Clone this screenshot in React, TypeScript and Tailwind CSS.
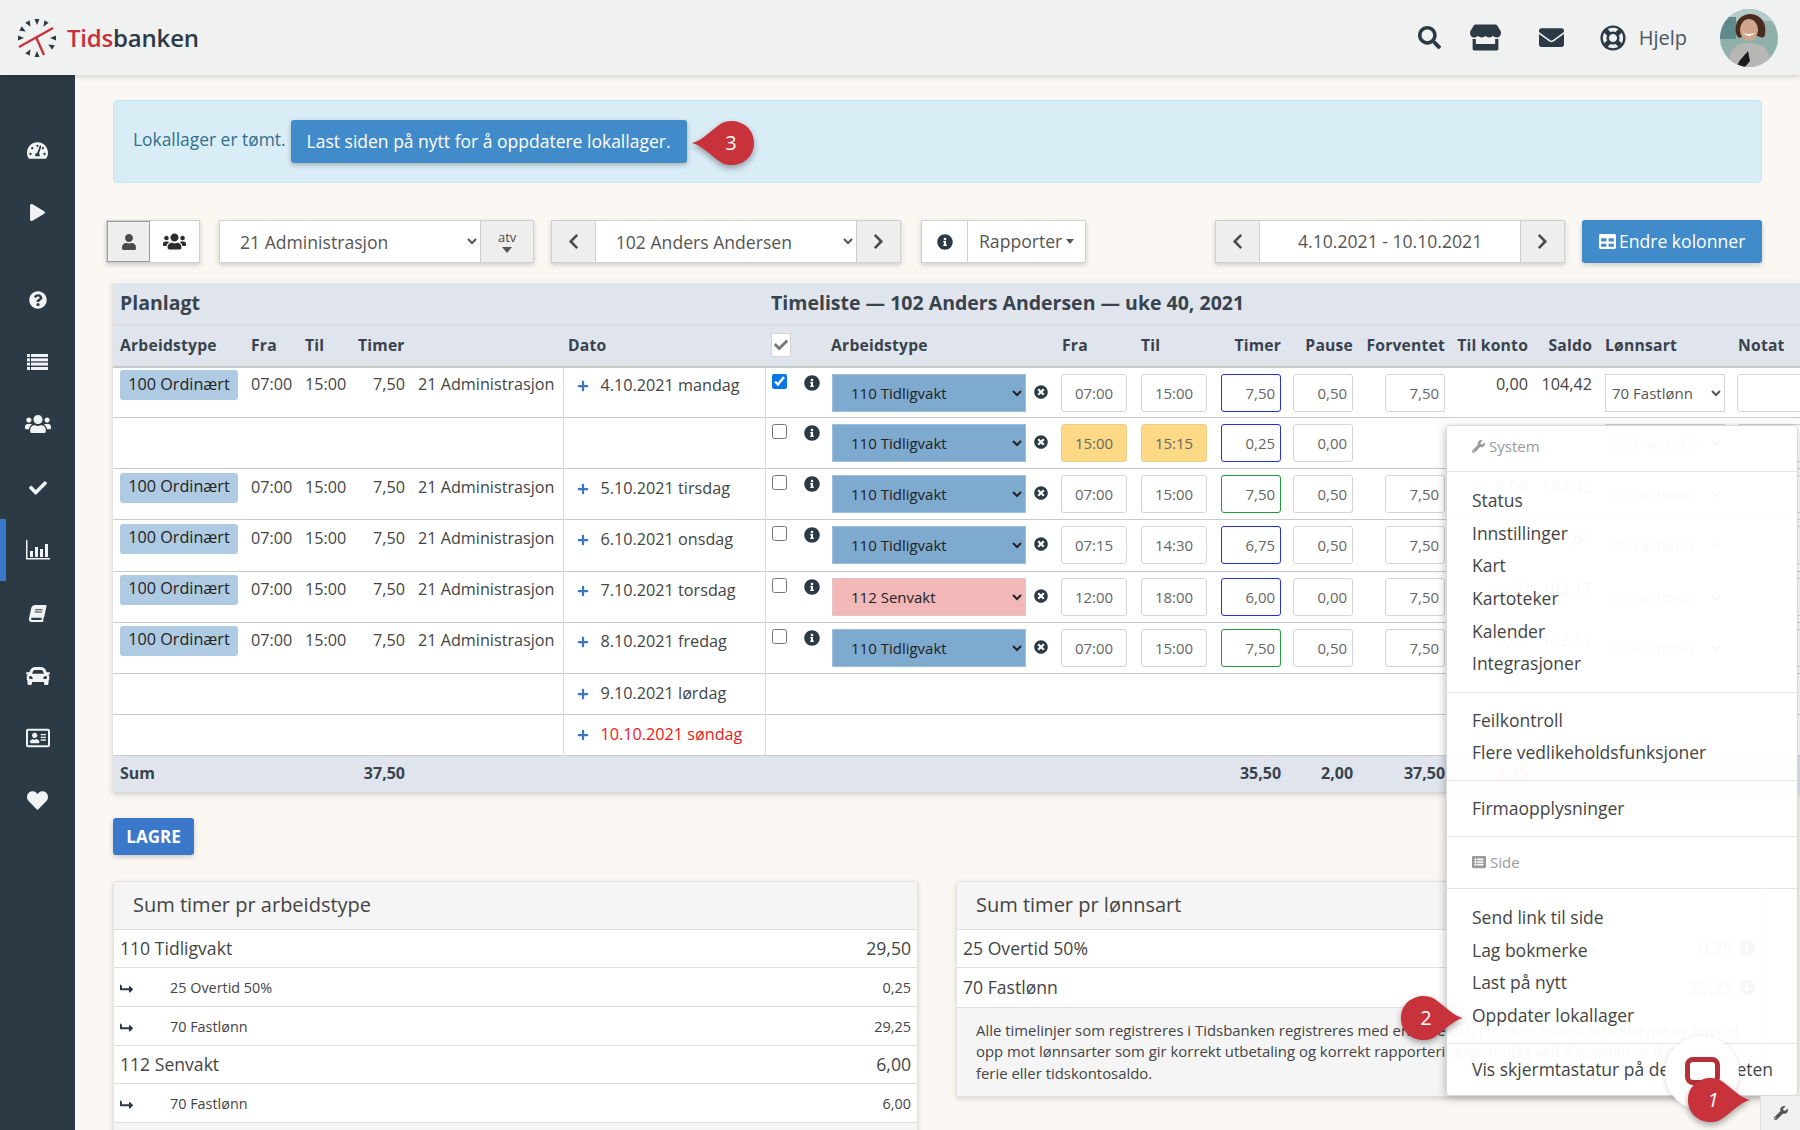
import {
  FaBook, FaCar, FaCheck, FaChevronLeft, FaChevronRight, FaEnvelope, FaHeart, FaInfoCircle, FaLevelUpAlt,
  FaListAlt, FaPlay, FaPlus, FaQuestionCircle, FaRegAddressCard, FaRegLifeRing, FaSearch, FaStore, FaTable,
  FaTachometerAlt, FaTimesCircle, FaUser, FaUsers, FaWrench,
} from "react-icons/fa";

interface Row {
  plan: boolean;
  date?: string;
  type: string;
  fra: string;
  til: string;
  timer: string;
  pause: string;
  forv?: string;
  konto?: string;
  saldo?: string;
  lonn: string;
  warn?: boolean;
  green?: boolean;
  checked?: boolean;
  // the rows in the picture are not all the same height, and their text sits a little differently
  h: string;
  tp: string;
  dp: string;
  bp: string;
}

const ROWS: Row[] = [
  { h: "h-[50px]", tp: "pt-[4px]", dp: "pt-[5px]", bp: "pt-[2px]", plan: true, date: "4.10.2021 mandag", type: "110 Tidligvakt", fra: "07:00", til: "15:00", timer: "7,50", pause: "0,50", forv: "7,50", konto: "0,00", saldo: "104,42", lonn: "70 Fastlønn", checked: true },
  { h: "h-[51px]", tp: "pt-[6px]", dp: "pt-[7px]", bp: "pt-[4px]", plan: false, type: "110 Tidligvakt", fra: "15:00", til: "15:15", timer: "0,25", pause: "0,00", lonn: "25 Overtid 50%", warn: true },
  { h: "h-[51px]", tp: "pt-[6px]", dp: "pt-[7px]", bp: "pt-[4px]", plan: true, date: "5.10.2021 tirsdag", type: "110 Tidligvakt", fra: "07:00", til: "15:00", timer: "7,50", pause: "0,50", forv: "7,50", konto: "0,00", saldo: "104,42", lonn: "70 Fastlønn", green: true },
  { h: "h-[52px]", tp: "pt-[6px]", dp: "pt-[7px]", bp: "pt-[4px]", plan: true, date: "6.10.2021 onsdag", type: "110 Tidligvakt", fra: "07:15", til: "14:30", timer: "6,75", pause: "0,50", forv: "7,50", konto: "-0,75", saldo: "103,67", lonn: "70 Fastlønn" },
  { h: "h-[51px]", tp: "pt-[5px]", dp: "pt-[6px]", bp: "pt-[3px]", plan: true, date: "7.10.2021 torsdag", type: "112 Senvakt", fra: "12:00", til: "18:00", timer: "6,00", pause: "0,00", forv: "7,50", konto: "-1,50", saldo: "102,17", lonn: "70 Fastlønn" },
  { h: "h-[51px]", tp: "pt-[5px]", dp: "pt-[6px]", bp: "pt-[3px]", plan: true, date: "8.10.2021 fredag", type: "110 Tidligvakt", fra: "07:00", til: "15:00", timer: "7,50", pause: "0,50", forv: "7,50", konto: "0,00", saldo: "102,17", lonn: "70 Fastlønn", green: true },
];

function Logo() {
  const ticks = [0, 30, 90, 120, 180, 210, 270, 300, 330];
  return (
    <svg width="42" height="42" viewBox="0 0 42 42" className="shrink-0">
      {ticks.map((a) => (
        <polygon key={a} points="21,8 18.5,2 23.5,2" fill="#2c3a46" transform={`rotate(${a} 21 21)`} />
      ))}
      <path d="M3 30 L37 11" stroke="#c8323b" strokeWidth="2.4" />
      <path d="M20 20 L28 38" stroke="#c8323b" strokeWidth="2.4" />
    </svg>
  );
}

function Avatar() {
  return (
    <svg width="58" height="58" viewBox="0 0 58 58" className="shrink-0 rounded-full">
      <rect width="58" height="58" fill="#8fb0ab" />
      <rect x="0" y="0" width="58" height="12" fill="#b4cbc9" />
      <rect x="0" y="8" width="16" height="22" fill="#5f8a8c" />
      <path d="M16 24 C14 9 24 5 31 5 C42 6 47 15 45 26 C44 30 40 28 38 27 L22 28 C19 30 17 28 16 24 Z" fill="#4a2c1e" />
      <ellipse cx="29" cy="21" rx="9" ry="11" fill="#d0a68c" />
      <path d="M23 24 Q29 30 35 24 Q29 26 23 24 Z" fill="#fff" />
      <path d="M8 58 C8 46 12 38 20 35 L26 34 L32 34 L42 37 C48 40 51 50 51 58 Z" fill="#b7b7b5" />
      <path d="M17 58 C18 52 24 47 28 42 L30 52 L25 58 Z" fill="#1c1c1e" />
    </svg>
  );
}

function Callout({ n, className, dir }: { n: string; className: string; dir: "left" | "right" }) {
  return (
    <div className={`absolute flex items-center justify-center ${className}`}>
      <svg width="66" height="50" viewBox="0 0 66 50" className="absolute left-0 top-0 drop-shadow-[0_3px_3px_rgba(0,0,0,0.35)]">
        {dir === "left" ? (
          <path d="M2 25 C12 23 22 11 32 5 C44 -1 64 6 64 25 C64 44 44 51 32 45 C22 39 12 27 2 25 Z" fill="#c8323b" />
        ) : (
          <path d="M64 25 C54 23 44 11 34 5 C22 -1 2 6 2 25 C2 44 22 51 34 45 C44 39 54 27 64 25 Z" fill="#c8323b" />
        )}
      </svg>
      <span className={`relative text-[20px] text-white ${dir === "left" ? "ml-[16px]" : "mr-[12px]"} ${n === "1" ? "italic" : ""}`}>{n}</span>
    </div>
  );
}

function NavIcon({ children, active, mt }: { children: React.ReactNode; active?: boolean; mt: string }) {
  return (
    <div className={`relative flex h-[22px] items-center justify-center text-[#f2f3f4] ${mt}`}>
      {active && <div className="absolute left-0 top-[-20px] h-[62px] w-[6px] bg-[#3b78c9]" />}
      {children}
    </div>
  );
}

function Sidebar() {
  return (
    <aside className="w-[75px] shrink-0 bg-[#2c3a46] pt-[64px]">
      <NavIcon mt="mt-0"><FaTachometerAlt size={21} /></NavIcon>
      <NavIcon mt="mt-[40px]"><FaPlay size={17} /></NavIcon>
      <NavIcon mt="mt-[66px]"><FaQuestionCircle size={18} /></NavIcon>
      <NavIcon mt="mt-[40px]">
        <svg width="21" height="16" viewBox="0 0 21 16" fill="currentColor">
          <rect x="0" y="0" width="3" height="3" /><rect x="4" y="0" width="17" height="3" />
          <rect x="0" y="4.3" width="3" height="3" /><rect x="4" y="4.3" width="17" height="3" />
          <rect x="0" y="8.6" width="3" height="3" /><rect x="4" y="8.6" width="17" height="3" />
          <rect x="0" y="13" width="3" height="3" /><rect x="4" y="13" width="17" height="3" />
        </svg>
      </NavIcon>
      <NavIcon mt="mt-[40px]"><FaUsers size={26} /></NavIcon>
      <NavIcon mt="mt-[42px]"><FaCheck size={18} /></NavIcon>
      <NavIcon mt="mt-[40px]" active>
        <svg width="24" height="20" viewBox="0 0 24 20" fill="currentColor">
          <path d="M0 0h1.5v18H24v1.5H0z" />
          <rect x="4" y="11" width="3" height="6" />
          <rect x="9" y="7" width="3" height="10" />
          <rect x="14" y="9" width="3" height="8" />
          <rect x="19" y="4" width="3" height="13" />
        </svg>
      </NavIcon>
      <NavIcon mt="mt-[41px]"><FaBook size={17} className="-skew-x-12" /></NavIcon>
      <NavIcon mt="mt-[41px]"><FaCar size={24} /></NavIcon>
      <NavIcon mt="mt-[40px]"><FaRegAddressCard size={24} /></NavIcon>
      <NavIcon mt="mt-[40px]"><FaHeart size={21} /></NavIcon>
    </aside>
  );
}

function Header() {
  return (
    <header className="relative z-10 flex h-[75px] items-center bg-[#f0f1f1] pl-[16px] pr-[22px] shadow-[0_2px_5px_rgba(0,0,0,0.15)]">
      <Logo />
      <div className="ml-[9px] text-[24px] font-semibold tracking-[-0.2px] text-[#2c3a46]">
        <span className="text-[#c8323b]">Tids</span>banken
      </div>
      <div className="ml-auto flex items-center text-[#2c3a46]">
        <FaSearch size={23} />
        <FaStore size={31} className="ml-[29px]" />
        <FaEnvelope size={25} className="ml-[38px]" />
        <FaRegLifeRing size={26} className="ml-[36px]" />
        <span className="ml-[13px] text-[20px] text-[#4b5763]">Hjelp</span>
        <div className="ml-[33px]"><Avatar /></div>
      </div>
    </header>
  );
}

function Toolbar() {
  const box = "flex h-[43px] items-center border border-[#cfcfcf] bg-white shadow-[0_2px_5px_rgba(0,0,0,0.18)]";
  const grey = "flex h-full items-center justify-center bg-[#eeeeee] text-[#4b4b4b]";
  return (
    <div className="-ml-[7px] mt-[37px] flex items-center text-[17.6px] text-[#555555]">
      <div className={`${box} w-[94px]`}>
        <div className={`${grey} w-[44px] border border-[#9c9c9c] text-[#2c2c2c]`}><FaUser size={16} /></div>
        <div className="flex w-[50px] justify-center text-[#2c2c2c]"><FaUsers size={23} /></div>
      </div>
      <div className={`${box} ml-[19px] w-[315px]`}>
        <select defaultValue="a" className="h-full w-[262px] bg-white pl-[16px] pr-[4px] text-[17.6px] text-[#555555] outline-none">
          <option value="a">21 Administrasjon</option>
        </select>
        <div className={`${grey} w-[53px] flex-col border-l border-[#cfcfcf] text-[13px] leading-[14px]`}>
          atv
          <span className="mt-[3px] h-0 w-0 border-x-[5px] border-t-[6px] border-x-transparent border-t-[#555555]" />
        </div>
      </div>
      <div className={`${box} ml-[17px] w-[350px]`}>
        <div className={`${grey} w-[44px] border-r border-[#cfcfcf]`}><FaChevronLeft size={17} /></div>
        <select defaultValue="a" className="h-full w-[262px] bg-white pl-[16px] pr-[4px] text-[17.6px] text-[#555555] outline-none">
          <option value="a">102 Anders Andersen</option>
        </select>
        <div className={`${grey} w-[44px] border-l border-[#cfcfcf]`}><FaChevronRight size={17} /></div>
      </div>
      <div className={`${box} ml-[20px] w-[165px]`}>
        <div className="flex h-full w-[46px] items-center justify-center border-r border-[#cfcfcf] text-[#2c3a46]"><FaInfoCircle size={16} /></div>
        <div className="flex items-center pl-[11px]">
          Rapporter
          <span className="ml-[4px] h-0 w-0 border-x-[4px] border-t-[5px] border-x-transparent border-t-[#555555]" />
        </div>
      </div>
      <div className={`${box} ml-auto w-[350px]`}>
        <div className={`${grey} w-[44px] border-r border-[#cfcfcf]`}><FaChevronLeft size={17} /></div>
        <div className="flex-1 text-center">4.10.2021 - 10.10.2021</div>
        <div className={`${grey} w-[44px] border-l border-[#cfcfcf]`}><FaChevronRight size={17} /></div>
      </div>
      <button className="ml-[17px] flex h-[43px] w-[180px] items-center justify-center gap-[3px] rounded-[3px] bg-[#428bca] text-white shadow-[0_2px_5px_rgba(0,0,0,0.2)]">
        <FaTable size={17} />
        Endre kolonner
      </button>
    </div>
  );
}

function TimeInput({ value, className }: { value: string; className: string }) {
  return (
    <input
      readOnly
      value={value}
      className={`h-[38px] w-full rounded-[3px] border bg-white text-[15px] text-[#666666] outline-none ${className}`}
    />
  );
}

function TimeRow({ r }: { r: Row }) {
  const senvakt = r.type === "112 Senvakt";
  const clock = r.warn ? "border-[#e5d08e] !bg-[#fdd985] text-center" : "border-[#d4d4d4] text-center";
  const num = "pr-[5px] text-right";
  return (
    <tr className={`border-b border-[#c9c9c9] align-top text-[16.2px] text-[#444444] ${r.h}`}>
      <td className={`pl-[7px] ${r.bp}`}>
        {r.plan && <div className="flex h-[30px] w-[118px] items-center justify-center rounded-[3px] bg-[#afcbe3] pb-[2px] text-[#222222]">100 Ordinært</div>}
      </td>
      <td className={`pl-[7px] ${r.tp}`}>{r.plan && "07:00"}</td>
      <td className={`pl-[7px] ${r.tp}`}>{r.plan && "15:00"}</td>
      <td className={`pr-[6px] text-right ${r.tp}`}>{r.plan && "7,50"}</td>
      <td className={`whitespace-nowrap pl-[7px] ${r.tp}`}>{r.plan && "21 Administrasjon"}</td>
      <td className={`border-l border-[#dcdcdc] ${r.dp}`}>
        {r.date && (
          <div className="flex items-center pl-[13px]">
            <FaPlus size={12} className="mt-[2px] text-[#3b78c0]" />
            <span className="ml-[12px]">{r.date}</span>
          </div>
        )}
      </td>
      <td className="border-l border-[#dcdcdc] pl-[6px] pt-[6px]">
        <input type="checkbox" readOnly checked={!!r.checked} className="block h-[15px] w-[15px] accent-[#0a75e6]" />
      </td>
      <td className="pt-[7px]"><FaInfoCircle size={16} className="ml-[4px] text-[#2c3a46]" /></td>
      <td className="pl-[7px] pt-[6px]">
        <select
          defaultValue="a"
          className={`h-[38px] w-[194px] border pl-[14px] pr-[2px] text-[15px] text-[#222222] ${senvakt ? "border-[#e7c4c4] bg-[#f2b8b8]" : "border-[#9dbdd8] bg-[#7faacf]"}`}
        >
          <option value="a">{r.type}</option>
        </select>
      </td>
      <td className="pt-[17px]"><FaTimesCircle size={14} className="ml-[8px] text-[#2c3a46]" /></td>
      <td className="px-[7px] pt-[6px]"><TimeInput value={r.fra} className={clock} /></td>
      <td className="px-[7px] pt-[6px]"><TimeInput value={r.til} className={clock} /></td>
      <td className="pl-[7px] pr-[6px] pt-[6px]"><TimeInput value={r.timer} className={`${num} ${r.green ? "border-[#1f9d3a]" : "border-[#2430d8]"}`} /></td>
      <td className="pl-[6px] pr-[7px] pt-[6px]"><TimeInput value={r.pause} className={`${num} border-[#d4d4d4]`} /></td>
      <td className="pl-[25px] pr-[6px] pt-[6px]">{r.forv && <TimeInput value={r.forv} className={`${num} border-[#d4d4d4]`} />}</td>
      <td className={`pr-[7px] text-right ${r.tp} ${r.konto?.startsWith("-") ? "text-[#e23b3b]" : ""}`}>{r.konto}</td>
      <td className={`pr-[6px] text-right ${r.tp}`}>{r.saldo}</td>
      <td className="pl-[7px] pt-[6px]">
        <select defaultValue="a" className="h-[38px] w-[120px] border border-[#d4d4d4] bg-white pl-[2px] pr-[8px] text-[15px] text-[#555555]">
          <option value="a">{r.lonn}</option>
        </select>
      </td>
      <td className="pl-[6px] pt-[6px]"><div className="h-[38px] w-[80px] rounded-[3px] border border-[#d4d4d4] bg-white" /></td>
    </tr>
  );
}

function EmptyRow({ date, red }: { date: string; red?: boolean }) {
  return (
    <tr className="h-[41px] border-b border-[#c9c9c9] align-middle text-[16.2px] text-[#444444]">
      <td colSpan={5} />
      <td className="border-l border-[#dcdcdc]">
        <div className="flex items-center pl-[13px]">
          <FaPlus size={12} className="mt-[2px] text-[#3b78c0]" />
          <span className={`ml-[12px] ${red ? "text-[#f01818]" : ""}`}>{date}</span>
        </div>
      </td>
      <td colSpan={13} className="border-l border-[#dcdcdc]" />
    </tr>
  );
}

function TimeTable() {
  const widths = [131, 54, 53, 60, 152, 202, 35, 25, 201, 28, 80, 80, 73, 73, 91, 84, 63, 133, 69];
  const th = "font-bold pt-[8px] align-top text-[15.7px] tracking-[0.2px]";
  return (
    <div className="-mr-[38px] mt-[19px] border-t border-[#ffffff] bg-white shadow-[0_2px_6px_rgba(0,0,0,0.2)]">
      <table className="w-[1687px] table-fixed border-collapse">
        <colgroup>
          {widths.map((w, i) => (
            <col key={i} style={{ width: w }} />
          ))}
        </colgroup>
        <thead className="bg-[#e0e5ed] text-left text-[#39434d]">
          <tr className="h-[42px] border-b-2 border-[#d9dde3] text-[19.5px] font-bold">
            <th colSpan={5} className="pb-[2px] pl-[7px]">Planlagt</th>
            <th />
            <th colSpan={13} className="whitespace-nowrap pb-[2px] pl-[6px]">Timeliste — 102 Anders Andersen — uke 40, 2021</th>
          </tr>
          <tr className="h-[42px] border-b-2 border-[#c9c9c9]">
            <th className={`${th} pl-[7px]`}>Arbeidstype</th>
            <th className={`${th} pl-[7px]`}>Fra</th>
            <th className={`${th} pl-[7px]`}>Til</th>
            <th className={`${th} pl-[7px]`}>Timer</th>
            <th className={th} />
            <th className={`${th} pl-[5px]`}>Dato</th>
            <th className="pl-[6px] pt-[7px] align-top">
              <div className="flex h-[24px] w-[20px] items-center justify-center border border-[#d4d4d4] bg-white text-[#777777]"><FaCheck size={14} /></div>
            </th>
            <th className={th} />
            <th className={`${th} pl-[6px]`}>Arbeidstype</th>
            <th className={th} />
            <th className={`${th} pl-[8px]`}>Fra</th>
            <th className={`${th} pl-[7px]`}>Til</th>
            <th className={`${th} pr-[6px] text-right`}>Timer</th>
            <th className={`${th} pr-[7px] text-right`}>Pause</th>
            <th className={`${th} pr-[6px] text-right`}>Forventet</th>
            <th className={`${th} pr-[7px] text-right`}>Til konto</th>
            <th className={`${th} pr-[6px] text-right`}>Saldo</th>
            <th className={`${th} pl-[7px]`}>Lønnsart</th>
            <th className={`${th} pl-[7px]`}>Notat</th>
          </tr>
        </thead>
        <tbody>
          {ROWS.map((r, i) => (
            <TimeRow key={i} r={r} />
          ))}
          <EmptyRow date="9.10.2021 lørdag" />
          <EmptyRow date="10.10.2021 søndag" red />
        </tbody>
        <tfoot>
          <tr className="h-[37px] bg-[#e0e5ed] text-[16px] font-bold text-[#39434d]">
            <td className="pb-[2px] pl-[7px]">Sum</td>
            <td colSpan={3} className="pb-[2px] pr-[6px] text-right">37,50</td>
            <td colSpan={8} />
            <td className="pb-[2px] pr-[6px] text-right">35,50</td>
            <td className="pb-[2px] pr-[7px] text-right">2,00</td>
            <td className="pb-[2px] pr-[6px] text-right">37,50</td>
            <td className="pb-[2px] pr-[7px] text-right text-[#e23b3b]">-2,25</td>
            <td colSpan={3} />
          </tr>
        </tfoot>
      </table>
    </div>
  );
}

function PanelHead({ title }: { title: string }) {
  return (
    <div className="flex h-[48px] items-center border-b border-[#dedede] bg-[#f5f5f5] pb-[2px] pl-[19px] text-[20px] text-[#444444]">{title}</div>
  );
}

function MainLine({ name, value, info, h = "h-[38px]" }: { name: string; value?: string; info?: boolean; h?: string }) {
  return (
    <div className={`flex items-center justify-between border-b border-[#dedede] pl-[6px] pr-[6px] text-[17.6px] text-[#444444] ${h}`}>
      {name}
      {value && (
        <span className="flex items-center gap-[6px]">
          {value}
          {info && <FaInfoCircle size={16} className="text-[#2c3a46]" />}
        </span>
      )}
    </div>
  );
}

function SubLine({ name, value }: { name: string; value: string }) {
  return (
    <div className="flex h-[39px] items-center border-b border-[#dedede] pl-[6px] pr-[6px] pt-[2px] text-[14.4px] text-[#444444]">
      <FaLevelUpAlt size={13} className="rotate-90 text-[#2c3a46]" />
      <span className="ml-[37px]">{name}</span>
      <span className="ml-auto">{value}</span>
    </div>
  );
}

function Panels() {
  return (
    <div className="mt-[26px] flex gap-[38px]">
      <div className="h-[280px] w-[805px] rounded-t-[3px] border border-[#e2e2e2] bg-white shadow-[0_2px_5px_rgba(0,0,0,0.15)]">
        <PanelHead title="Sum timer pr arbeidstype" />
        <MainLine name="110 Tidligvakt" value="29,50" />
        <SubLine name="25 Overtid 50%" value="0,25" />
        <SubLine name="70 Fastlønn" value="29,25" />
        <MainLine name="112 Senvakt" value="6,00" />
        <SubLine name="70 Fastlønn" value="6,00" />
        <div className="h-[10px] bg-[#f5f5f5]" />
      </div>
      <div className="w-[806px] self-start rounded-[3px] border border-[#e2e2e2] bg-white shadow-[0_2px_5px_rgba(0,0,0,0.15)]">
        <PanelHead title="Sum timer pr lønnsart" />
        <MainLine name="25 Overtid 50%" value="0,25" info />
        <MainLine name="70 Fastlønn" value="35,25" info h="h-[40px]" />
        <div className="h-[88px] whitespace-nowrap bg-[#f5f5f5] px-[19px] pt-[12px] text-[14.9px] leading-[21.3px] text-[#444444]">
          Alle timelinjer som registreres i Tidsbanken registreres med en arbeidstype. Hver enkelt arbeidstype er knyttet
          <br />
          opp mot lønnsarter som gir korrekt utbetaling og korrekt rapporteringsgrunnlag ved å oppdatere feltene for
          <br />
          ferie eller tidskontosaldo.
        </div>
      </div>
    </div>
  );
}

function MenuSection({ items, className }: { items: string[]; className: string }) {
  return (
    <div className={`border-b border-[#e4e4e4] pl-[25px] text-[17.5px] text-[#444444] last:border-b-0 ${className}`}>
      {items.map((t) => (
        <div key={t} className="flex h-[32.6px] items-center whitespace-nowrap">{t}</div>
      ))}
    </div>
  );
}

function ToolsMenu() {
  return (
    <div className="absolute left-[1446px] top-[425px] z-20 w-[352px] rounded-[4px] border border-[#d8d8d8] bg-white/[0.96] shadow-[-1px_2px_8px_rgba(0,0,0,0.25)]">
      <div className="flex h-[46px] items-center gap-[4px] border-b border-[#e4e4e4] pb-[4px] pl-[25px] text-[15px] text-[#9a9a9a]">
        <FaWrench size={13} />
        System
      </div>
      <MenuSection className="py-[12px]" items={["Status", "Innstillinger", "Kart", "Kartoteker", "Kalender", "Integrasjoner"]} />
      <MenuSection className="py-[11px]" items={["Feilkontroll", "Flere vedlikeholdsfunksjoner"]} />
      <MenuSection className="py-[11.5px]" items={["Firmaopplysninger"]} />
      <div className="flex h-[52px] items-center gap-[4px] border-b border-[#e4e4e4] pb-[2px] pl-[25px] text-[15px] text-[#9a9a9a]">
        <FaListAlt size={14} />
        Side
      </div>
      <MenuSection className="py-[11.5px]" items={["Send link til side", "Lag bokmerke", "Last på nytt", "Oppdater lokallager"]} />
      <MenuSection className="pb-[10px] pt-[9px]" items={["Vis skjermtastatur på denne enheten"]} />
    </div>
  );
}

export default function App() {
  return (
    <div className="relative flex h-[1130px] w-[1800px] flex-col overflow-hidden bg-[#fbf8f4] font-['Open_Sans',sans-serif]">
      <Header />
      <div className="flex min-h-0 flex-1">
        <Sidebar />
        <main className="flex-1 px-[38px] pt-[25px]">
          <div className="flex h-[83px] items-start rounded-[4px] border border-[#bce8f1] bg-[#d9edf7] pl-[19px]">
            <span className="mt-[25px] text-[17.4px] text-[#31708f]">Lokallager er tømt.</span>
            <button className="ml-[5px] mt-[19px] h-[43px] w-[396px] rounded-[3px] bg-[#428bca] text-[17.5px] text-white shadow-[0_2px_5px_rgba(0,0,0,0.25)]">
              Last siden på nytt for å oppdatere lokallager.
            </button>
          </div>
          <Toolbar />
          <TimeTable />
          <button className="mt-[26px] block h-[37px] w-[81px] rounded-[3px] bg-[#3b78c9] text-[17px] font-bold text-white shadow-[0_2px_5px_rgba(0,0,0,0.2)]">
            LAGRE
          </button>
          <Panels />
        </main>
      </div>

      <ToolsMenu />

      <div className="absolute left-[1760px] top-[1095px] z-20 flex h-[35px] w-[40px] items-center justify-center border-l border-t border-[#dcdcdc] bg-[#f0f0f0] text-[#555555]">
        <FaWrench size={14} />
      </div>
      <div className="absolute left-[1665px] top-[1036px] z-30 flex h-[74px] w-[74px] items-start justify-center rounded-full bg-white pt-[21px] shadow-[0_2px_6px_rgba(0,0,0,0.15)]">
        <div className="h-[28px] w-[35px] rounded-[8px] border-[5px] border-[#b5303a] bg-white" />
      </div>
      <Callout n="3" dir="left" className="left-[690px] top-[118px] z-30 h-[50px] w-[66px]" />
      <Callout n="2" dir="right" className="left-[1399px] top-[993px] z-30 h-[50px] w-[66px]" />
      <Callout n="1" dir="right" className="left-[1686px] top-[1075px] z-40 h-[50px] w-[66px]" />
    </div>
  );
}
